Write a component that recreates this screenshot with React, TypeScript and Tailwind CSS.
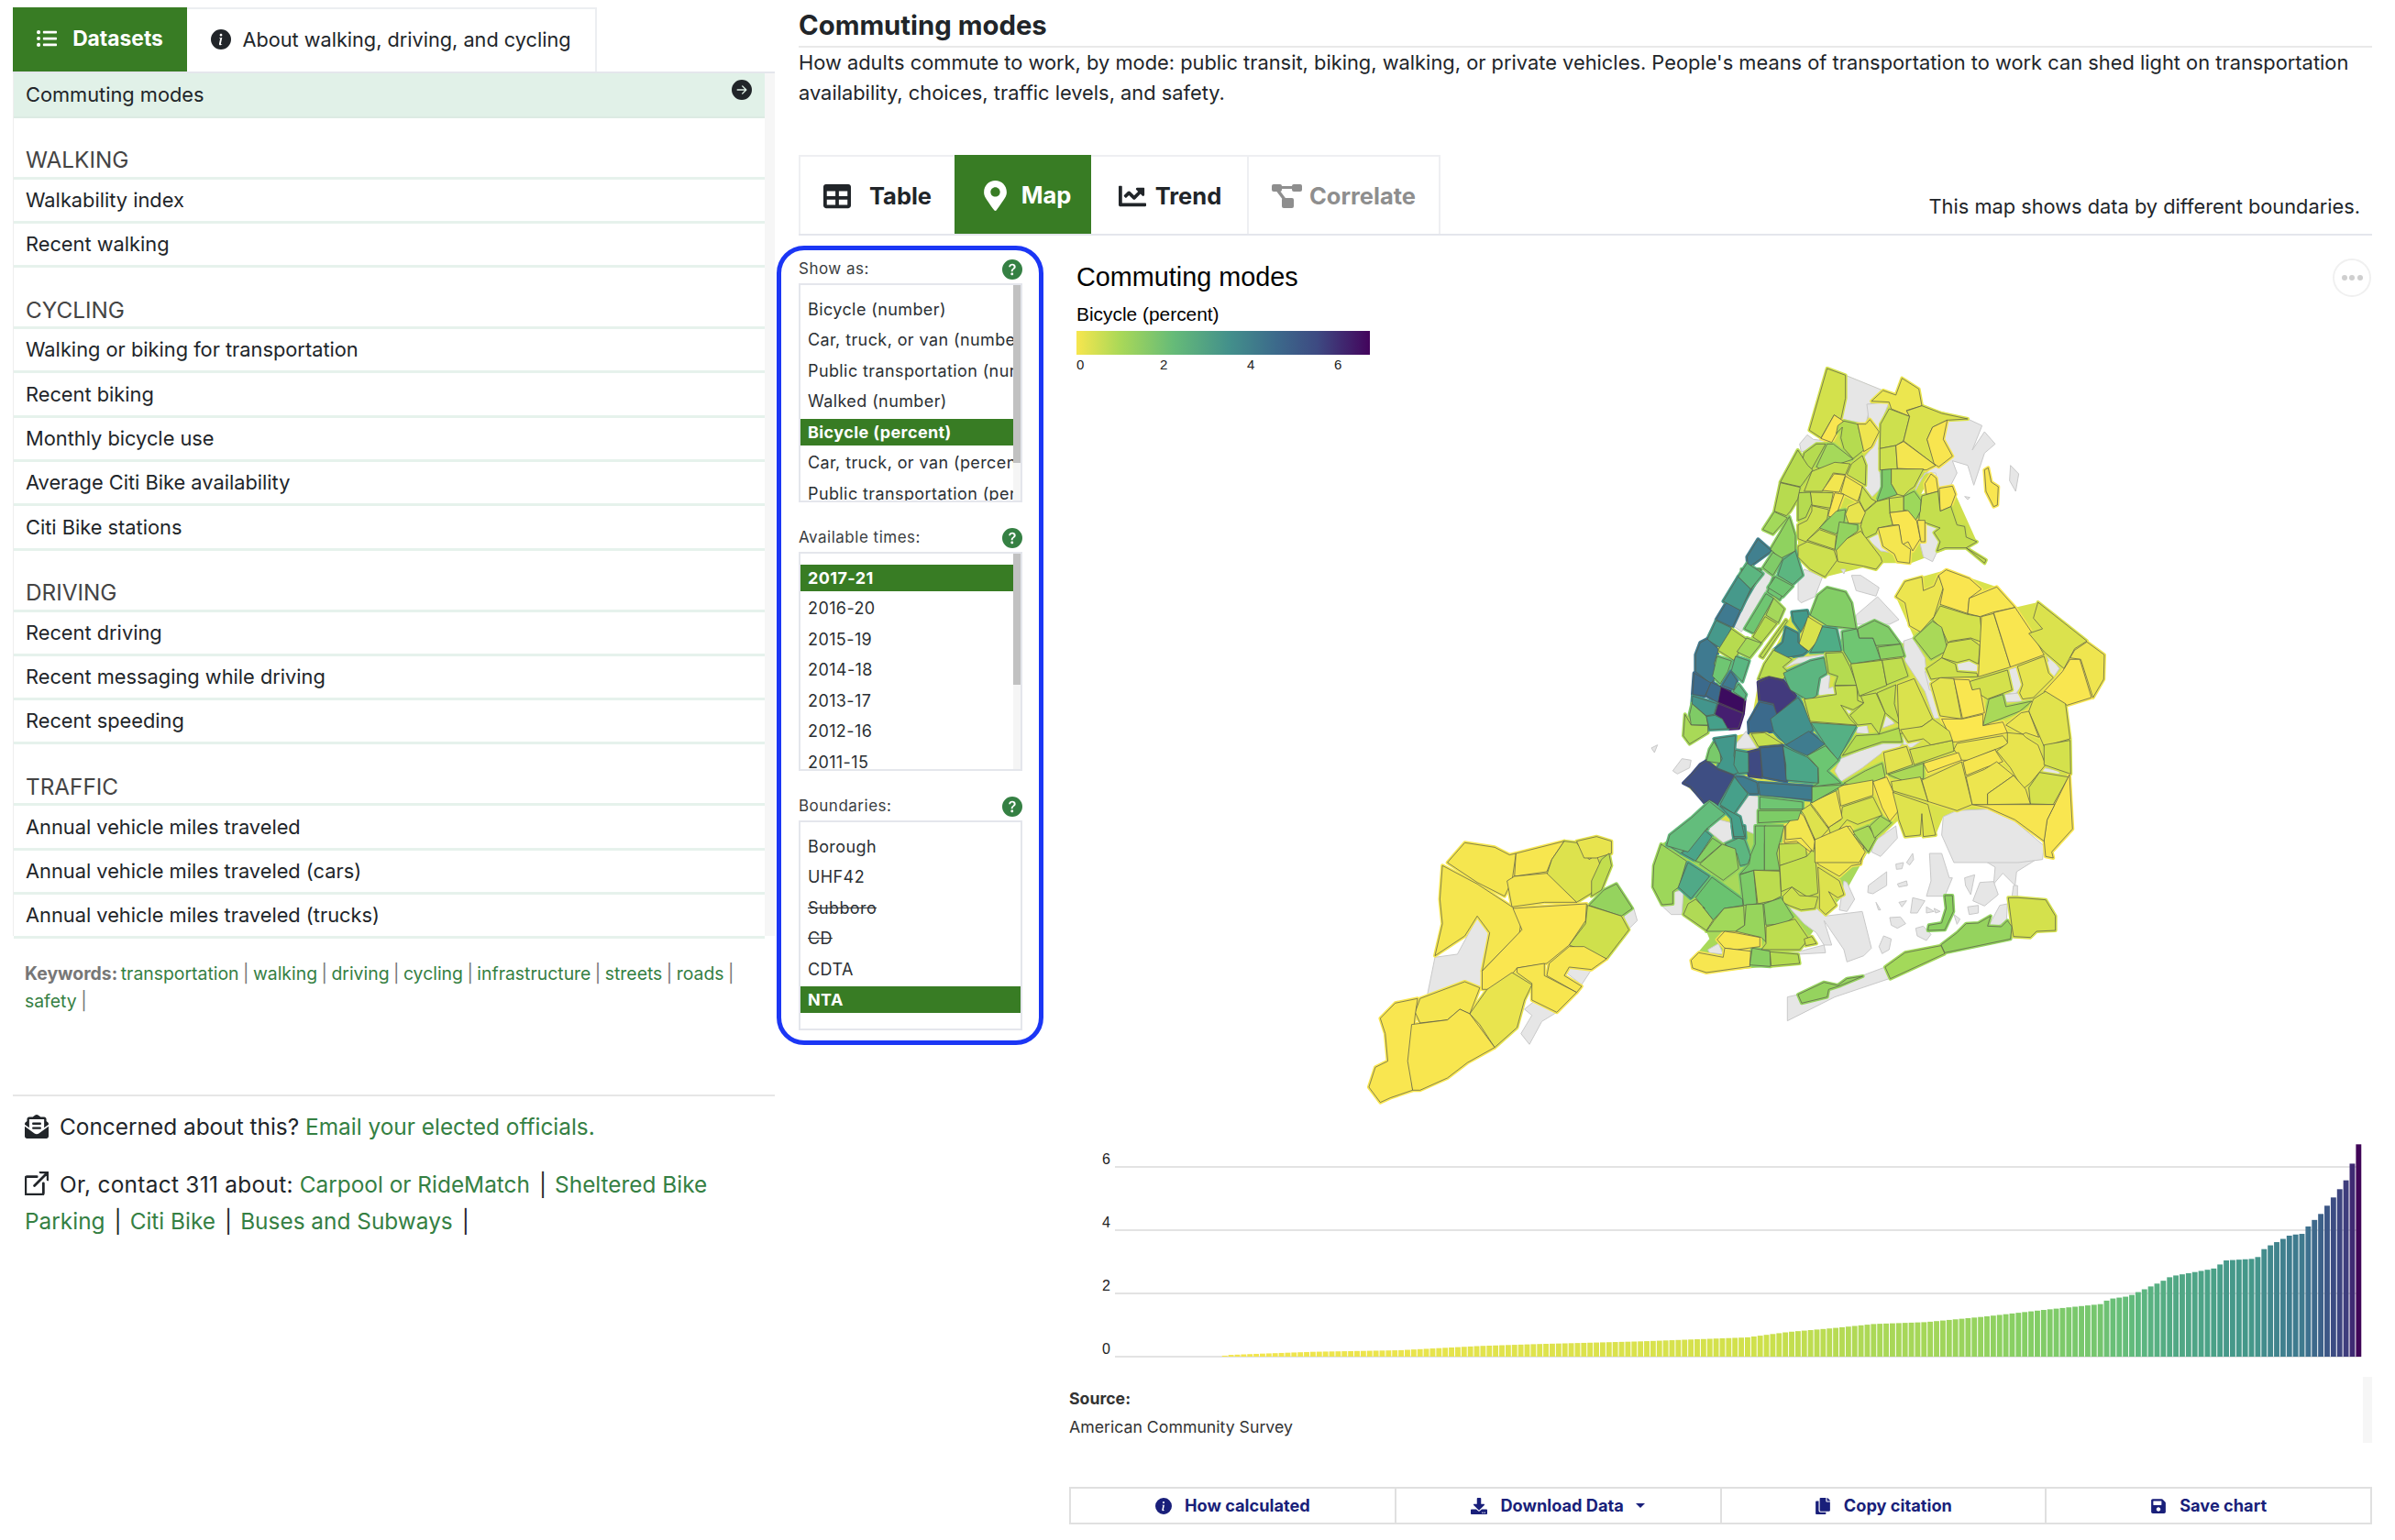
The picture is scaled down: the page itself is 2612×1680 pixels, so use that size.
import type { ReactNode } from 'react';
import { BsArrowRightCircleFill, BsBoxArrowUpRight, BsInfoCircleFill, BsQuestionCircleFill } from 'react-icons/bs';
import { FaChartLine, FaCopy, FaDownload, FaEnvelopeOpenText, FaListUl, FaMapMarkerAlt, FaSave, FaTable } from 'react-icons/fa';

const SECTIONS = [
  { title: 'WALKING', rows: ['Walkability index', 'Recent walking'] },
  { title: 'CYCLING', rows: ['Walking or biking for transportation', 'Recent biking', 'Monthly bicycle use', 'Average Citi Bike availability', 'Citi Bike stations'] },
  { title: 'DRIVING', rows: ['Recent driving', 'Recent messaging while driving', 'Recent speeding'] },
  { title: 'TRAFFIC', rows: ['Annual vehicle miles traveled', 'Annual vehicle miles traveled (cars)', 'Annual vehicle miles traveled (trucks)'] },
];

const KEYWORDS = ['transportation', 'walking', 'driving', 'cycling', 'infrastructure', 'streets', 'roads', 'safety'];

type Poly = [string, string];

// traced from the map, one list per crop so the numbers stay readable
const BRONX_LAND = '95,33 155,55 278,105 320,120 340,65 405,155 555,198 500,320 450,350 400,450 515,445 585,600 500,620 370,670 270,670 90,715 0,650 0,440 40,300 75,262';

const BRONX_GRAY = [
  '155,55 278,105 240,140 222,215 140,198 155,130',
  '225,150 298,143 262,235 232,205',
  '268,235 265,360 275,420 240,455 210,420 210,330 250,285',
  '485,205 555,198 602,220 570,300 610,240 645,280 610,310 575,415 555,350 505,335 520,375 500,415 460,425 450,375 415,375 380,440 395,400 440,355 470,350 505,320 475,265',
  '695,350 722,378 712,435 692,400',
  '545,452 562,455 555,462',
  '415,535 465,555 450,570 470,600 440,665 410,650 400,610',
  '225,590 260,570 300,635 270,630',
  '5,280 30,250 50,265 90,270 40,300 10,305',
  '20,690 80,715 55,780 10,800 0,790 0,730',
  '175,710 205,710 265,750 255,778 190,760',
  '190,840 260,780 330,855 300,870 190,870',
  '140,690 155,690 150,705',
];

const BRONX: Poly[] = [
  ['#d3e14c', '95,33 155,55 155,130 140,200 118,185 75,260 37,235'],
  ['#f9e650', '118,185 148,205 110,275 75,262'],
  ['#b5db50', '150,205 195,215 215,300 180,328 150,295 140,260 145,225 125,245 130,220'],
  ['#efe54f', '195,215 222,215 235,200 265,240 240,290 215,305'],
  ['#ece64f', '240,140 278,105 320,120 340,65 395,100 405,155 355,170 365,190 305,165 298,143'],
  ['#cde04e', '298,165 365,190 345,270 320,285 268,295 270,215'],
  ['#dbe24d', '355,172 405,155 470,180 555,198 488,202 440,225 422,265 450,350 345,270 365,190'],
  ['#f8e54f', '488,202 475,265 505,320 460,355 445,345 422,265 440,225'],
  ['#cde04e', '268,295 320,285 325,362 268,365'],
  ['#f4e650', '320,285 345,272 450,350 420,365 325,360'],
  ['#7ccb68', '275,365 305,362 305,410 325,445 258,468 275,420'],
  ['#cde04e', '305,362 410,362 380,420 365,430 345,450 325,445 305,410'],
  ['#f9e650', '415,410 435,378 452,392 458,435 420,445'],
  ['#f9e650', '462,425 505,418 515,445 500,485 465,500'],
  ['#f9e650', '610,365 622,358 632,405 655,420 652,480 640,485 615,435'],
  ['#c4de4e', '405,450 458,435 465,500 500,485 520,545 545,550 550,585 585,600 550,620 615,660 610,670 550,620 480,620 455,630 465,600 445,570 465,555 395,530'],
  ['#9dd85b', '345,452 380,435 402,465 400,500 385,530 360,500 345,495'],
  ['#cde04e', '298,458 345,452 345,500 300,505'],
  ['#c6df4d', '258,468 298,458 300,505 310,545 262,555 255,572 218,590 205,550 215,505'],
  ['#f9e650', '300,505 360,498 388,532 400,590 375,630 360,600 340,610 330,545 310,545'],
  ['#f4e650', '262,555 330,545 340,605 368,625 365,670 325,665 315,640 278,615'],
  ['#f9e650', '390,530 415,530 415,600 402,600'],
  ['#b5db50', '20,310 60,280 90,280 40,370 15,330'],
  ['#a5d95a', '95,280 115,280 180,330 135,345 70,360 60,355'],
  ['#c6df4e', '70,360 120,340 170,345 155,380 115,375 80,435 20,435 45,370'],
  ['#c6df4e', '175,345 210,318 222,350 220,415 160,380'],
  ['#f2e64f', '118,378 155,382 135,438 80,432'],
  ['#f2e64f', '155,385 212,420 195,468 140,440'],
  ['#cde04e', '40,438 115,440 105,490 45,480'],
  ['#f9e650', '120,440 150,445 120,525 98,515'],
  ['#cde04e', '210,420 240,460 255,468 218,500 200,465'],
  ['#e8e44e', '165,485 200,470 220,505 205,540 165,540 155,510'],
  ['#b5db50', '0,440 40,438 45,475 25,520 0,530'],
  ['#cde04e', '45,482 100,495 95,525 70,555 25,600 0,590 0,545 30,530 45,500'],
  ['#92d35f', '125,500 155,495 150,535 125,575 70,555 95,530'],
  ['#92d35f', '135,535 195,545 195,565 160,590 130,635 120,625'],
  ['#cde04e', '70,560 125,580 120,625 30,595'],
  ['#cde04e', '30,600 118,628 128,660 88,715 40,690 0,650 0,615'],
  ['#d5e14d', '205,565 270,650 275,665 255,690 215,680 130,665 125,628 160,590'],
];

const UPPER_WEST: Poly[] = [
  ['#b7db4f', '885,330 905,380 915,395 895,440 890,450 850,435'],
  ['#b7db4f', '850,437 890,452 885,490 870,530 862,545 838,530'],
  ['#a3d95a', '838,532 864,552 835,605 815,590'],
  ['#8fd25f', '868,548 880,610 880,660 850,685 830,655 850,600'],
  ['#41808f', '805,622 832,660 785,715 783,680'],
  ['#80cb68', '835,665 855,685 835,740 815,715'],
  ['#5cb680', '880,660 895,740 875,770 845,740 855,690'],
  ['#5cb680', '783,700 815,735 790,785 765,745'],
  ['#46998b', '765,745 790,785 770,855 735,825'],
  ['#6fc672', '840,745 875,775 855,810 825,780'],
];

const CENTRAL_LAND = '520,150 575,60 635,75 670,195 730,168 815,245 860,225 800,90 830,40 965,2 1130,58 1190,125 1265,108 1482,280 1480,360 1445,420 1355,445 1370,555 1378,850 1310,925 1285,885 1190,820 1000,790 955,810 930,870 810,820 700,925 680,960 440,885 350,830 270,880 180,850 240,800 175,765 105,700 180,628 205,555 275,545 320,535 350,370 385,355 430,365 400,265 440,190 460,140';

const CENTRAL_GRAY = [
  '365,5 400,25 295,205 268,185',
  '270,580 310,530 345,585 270,588',
  '430,325 480,290 575,278 540,298 470,310',
  '550,345 585,340 580,390 610,380 600,410 555,418 540,400',
  '825,235 855,225 895,290 900,340 945,485 925,490 895,400 830,300',
  '895,335 925,345 945,370 930,400 910,395',
  '620,445 640,445 670,490 670,510 640,490',
  '672,510 705,510 712,540 672,535',
  '740,480 775,468 795,505 750,522',
  '608,195 640,195 630,235 610,225',
  '995,310 1035,295 1075,315 1065,335 1000,335',
  '1235,215 1275,195 1295,270 1335,325 1315,355 1260,340 1300,300 1280,250',
  '1165,330 1198,320 1215,378 1190,410 1160,405 1180,395',
  '1155,410 1205,405 1240,430 1160,435',
  '1275,648 1335,660 1335,675 1280,665',
  '955,810 1000,790 1100,785 1190,825 1285,905 1280,950 1200,960 990,960 950,870',
  '600,660 620,620 680,595 760,570 820,570 800,600 755,600 690,650 620,695',
  '815,545 885,530 885,560 850,585 820,570',
  '320,740 352,745 345,870 310,855 280,795',
  '205,815 262,830 268,880 235,895 180,850',
  '700,360 735,335 755,400 735,415',
  '70,660 100,620 130,625 125,650 85,670',
  '0,585 20,575 10,600',
];

const CENTRAL: Poly[] = [
  ['#6cc072', '295,0 360,0 330,45 300,25'],
  ['#46998b', '300,20 340,45 290,130 245,105'],
  ['#3f7a90', '245,110 292,132 265,190 212,165'],
  ['#46998b', '212,168 262,192 232,262 183,230'],
  ['#3f7a90', '183,228 220,262 205,310 222,335 195,375 145,335 145,280 160,240'],
  ['#3b6a8c', '140,340 195,372 175,415 135,410'],
  ['#3b6a8c', '195,370 228,385 220,438 178,412'],
  ['#3c0b5f', '228,385 305,425 300,470 218,435'],
  ['#451f70', '218,440 300,472 285,520 250,522 232,490 208,475'],
  ['#43958c', '135,415 215,440 205,475 180,480 133,440'],
  ['#7fcb66', '125,475 133,440 180,482 185,510 130,510'],
  ['#a9d957', '110,475 130,510 185,512 185,535 125,572 105,545'],
  ['#45a08a', '180,482 208,478 232,490 250,522 190,525'],
  ['#6fc672', '400,25 445,55 420,100 380,75'],
  ['#6fc672', '375,80 400,95 335,210 305,195'],
  ['#a5d85a', '400,95 435,130 415,175 375,150'],
  ['#b7db4f', '372,155 410,178 360,240 332,222'],
  ['#b7db4f', '262,195 312,230 270,298 218,265'],
  ['#a3d95a', '312,225 360,242 322,290 280,270'],
  ['#6fc672', '215,285 262,300 250,335 225,375 200,350'],
  ['#5ab782', '275,285 320,300 298,368 262,332'],
  ['#3f7a90', '260,335 280,365 270,395 232,380'],
  ['#5ab782', '285,375 310,410 305,425 268,400'],
  ['#bddd4f', '440,165 445,170 365,290 355,285'],
  ['#83ce66', '575,60 635,75 655,110 670,195 625,190 575,185 520,150 545,85'],
  ['#429a8b', '460,140 510,135 515,155 490,205 465,170'],
  ['#d9e24c', '512,155 560,185 540,240 515,268 483,245'],
  ['#41908c', '440,190 480,210 480,240 510,268 495,280 435,290 400,265 430,240'],
  ['#4fad86', '560,188 605,195 622,268 520,272 540,235'],
  ['#6fc672', '625,205 672,195 680,225 725,225 750,295 655,310 630,270'],
  ['#80cc68', '675,195 730,168 775,190 815,245 735,250 725,225 680,225'],
  ['#8cd160', '740,255 815,245 828,285 750,295'],
  ['#bbdc4f', '400,265 460,295 430,320 450,340 430,360 385,350 350,360 370,310'],
  ['#5cb680', '432,340 520,300 565,290 575,340 550,355 540,415 515,430 455,395 445,375'],
  ['#423a7d', '350,370 385,355 430,365 475,420 410,475 400,440 355,430'],
  ['#3b6a8c', '355,435 400,445 410,475 405,530 320,535 318,500'],
  ['#42918c', '390,490 480,420 500,450 515,490 530,525 510,540 440,575 400,530'],
  ['#3f7c8f', '440,575 515,530 568,572 510,610 465,590'],
  ['#55b084', '522,502 672,512 610,625 570,575'],
  ['#c5df4e', '327,538 370,535 430,572 350,580'],
  ['#b5db50', '570,275 625,272 650,320 672,380 600,380 610,350 580,340'],
  ['#c5df4e', '600,382 672,380 675,430 695,438 660,460 620,445 650,490 670,510 520,498 500,425 540,420 605,410'],
  ['#bddd4e', '652,310 755,298 770,380 680,415'],
  ['#c0de4e', '755,298 820,290 840,350 770,378'],
  ['#c5df4e', '685,415 735,405 765,470 745,540 720,505 675,510 650,478 695,438'],
  ['#c6df4d', '738,405 800,378 795,440 815,510 765,470'],
  ['#dae24d', '805,378 860,358 920,490 885,515 810,540'],
  ['#ece54f', '830,40 885,25 890,70 925,55 940,20 955,60 925,155 880,205 845,185 830,110 800,90'],
  ['#f9e550', '965,2 1040,30 1080,65 1040,95 1035,145 990,130 945,115 955,65 940,20'],
  ['#f8e64f', '1040,95 1130,58 1190,125 1120,140 1075,155 1035,145'],
  ['#d3e14c', '945,120 1035,148 1075,155 1085,240 1045,225 980,235 970,240 950,195 920,165'],
  ['#a9d958', '860,225 920,170 950,190 970,265 915,295'],
  ['#d0e04c', '970,240 1045,228 1075,250 1070,310 1040,295 1000,305 950,290'],
  ['#cfe04c', '900,325 950,290 995,310 1000,335 1065,340 1068,352 950,355 915,360'],
  ['#f0e64f', '1080,155 1120,145 1175,320 1070,352'],
  ['#f9e650', '1120,142 1190,125 1240,200 1285,280 1175,320'],
  ['#dbe24d', '1250,160 1265,108 1425,235 1385,260 1350,325 1285,270 1235,210 1280,195'],
  ['#efe54f', '1385,265 1425,238 1482,280 1480,360 1445,420 1405,295 1370,290'],
  ['#f9e650', '1370,295 1402,295 1440,420 1360,445 1285,400 1345,335'],
  ['#d4e14c', '1040,368 1165,330 1180,395 1100,425 1050,395'],
  ['#e6e44e', '1198,318 1285,285 1300,340 1315,355 1250,420 1215,425 1205,405 1215,378'],
  ['#a9d958', '1105,425 1150,410 1160,450 1245,432 1205,465 1085,512 1095,470'],
  ['#e5e44e', '915,375 945,355 990,358 1015,490 945,480'],
  ['#f9e650', '990,360 1040,362 1050,395 1075,390 1090,470 1018,488'],
  ['#e1e34d', '1250,425 1290,400 1355,440 1370,555 1285,580 1235,465'],
  ['#ece54f', '1210,470 1235,465 1268,550 1225,535 1215,540 1160,510'],
  ['#fbe74f', '950,490 1018,490 1085,475 1085,512 1150,500 1165,535 1000,565 985,565'],
  ['#ede54f', '1000,570 1150,545 1170,572 1125,590 1040,625 1015,625 990,590'],
  ['#f6e64f', '1020,630 1125,590 1130,600 1150,630 1090,650 1030,675'],
  ['#e8e44e', '1130,595 1165,570 1165,535 1215,540 1225,550 1265,575 1290,640 1240,700 1215,720 1175,650'],
  ['#d4e14c', '1285,575 1370,560 1372,670 1285,640'],
  ['#d5e14c', '1270,665 1365,680 1315,770 1240,768 1235,715'],
  ['#f9e650', '1368,672 1378,850 1310,925 1315,945 1290,940 1285,885 1295,820 1320,770'],
  ['#f7e550', '1050,770 1320,770 1295,820 1285,890 1190,820 1100,780'],
  ['#e8e34e', '885,690 1015,630 1050,770 1000,790 905,760'],
  ['#ede54f', '1030,680 1090,655 1130,630 1185,675 1100,735 1100,770 1050,770'],
  ['#ede54f', '1100,735 1185,675 1225,720 1240,768 1100,770'],
  ['#f9e650', '890,635 1005,600 1015,625 905,665'],
  ['#d3e14c', '845,590 985,560 990,595 860,640'],
  ['#d9e24c', '815,525 885,515 920,490 975,530 985,560 915,575 890,555 840,565'],
  ['#b3db50', '625,610 670,545 745,540 810,520 820,565 755,565 680,590'],
  ['#e3e34e', '760,600 835,580 855,640 770,670'],
  ['#abd957', '775,672 890,635 890,685 830,695'],
  ['#a9d958', '630,700 700,660 755,635 765,680 700,710 670,715'],
  ['#efe54f', '610,710 725,690 725,740 620,775'],
  ['#f8e64f', '725,695 770,680 808,765 805,795 780,825 755,780'],
  ['#dfe34d', '785,695 880,680 905,760 790,725'],
  ['#dfe34d', '790,730 905,770 930,870 890,875 885,800 880,870 830,875 810,820 805,790'],
  ['#d7e24c', '625,778 725,745 755,805 675,835 640,820 590,880 580,845 620,820'],
  ['#eee54f', '520,765 605,725 625,815 580,845 540,790'],
  ['#dee24d', '490,790 520,770 580,850 540,895 500,805'],
  ['#f2e64f', '440,840 480,790 500,810 535,890 530,925 490,880 440,885'],
  ['#efe54f', '535,885 640,840 700,925 680,960 535,960'],
  ['#a9d958', '660,860 710,840 735,880 710,925'],
  ['#a7d858', '715,840 750,808 785,830 730,880'],
  ['#4ba688', '430,578 465,595 510,615 545,650 545,700 440,690 440,640'],
  ['#6cc672', '510,610 570,578 612,625 575,660 620,700 525,712 548,700 546,650'],
  ['#7dcb67', '525,712 630,705 525,765'],
  ['#79ca6a', '205,565 225,600 228,635 180,628 190,590'],
  ['#42988b', '205,555 275,545 270,610 285,665 270,672 215,650 232,620'],
  ['#47a08a', '275,592 318,600 318,665 285,668 270,640'],
  ['#3f4a82', '318,600 356,590 362,680 320,675'],
  ['#3c668a', '356,585 430,578 442,695 365,680'],
  ['#3e4e83', '180,628 215,655 272,675 218,770 190,755 175,765 130,712 105,700 130,675 160,640'],
  ['#3f7c8f', '272,678 300,680 345,698 350,735 320,735 290,705'],
  ['#3f7c8f', '350,698 525,710 525,755 355,740'],
  ['#46a08a', '272,680 315,735 270,800 225,770'],
  ['#6fc672', '355,745 495,762 495,785 355,785'],
  ['#7dcc66', '350,790 490,790 480,820 440,825 350,830'],
  ['#63bd7c', '190,760 240,800 180,850 120,925 50,905 60,870 130,815'],
  ['#46a08a', '225,775 290,810 305,875 270,875 262,815'],
];

const SOUTH_LAND = '65,200 92,60 125,40 200,0 750,0 790,45 690,225 630,290 545,405 545,450 240,480 190,440 250,370 240,345 165,290 95,258';

const SOUTH_GRAY = [
  '1020,0 1270,0 1340,65 1335,100 1255,150 1250,195 1210,155 1180,190 1185,135 1110,90',
  '510,265 550,278 600,270 630,295 750,280 780,400 755,425 700,445 690,405 625,310 650,390 625,390 600,350 560,320',
  '450,410 555,408 625,390 630,415 540,420',
  '245,405 280,385 295,420 250,415',
  '770,195 830,150 830,195 785,222 768,218',
  '860,125 885,120 880,140 862,142',
  '895,120 915,90 918,110 905,128',
  '865,190 895,180 898,195 870,200',
  '970,90 1010,90 1035,170 1045,170 1020,230 960,230 975,180',
  '1085,170 1118,160 1105,225 1088,195',
  '1135,185 1180,182 1195,225 1150,262 1112,245',
  '915,235 955,245 930,285 908,285',
  '960,265 985,280 960,285',
  '985,270 1005,280 990,285',
  '840,300 875,298 892,320 865,335 845,325',
  '925,335 950,328 975,355 960,375 930,360',
  '820,360 845,370 838,405 815,418 805,395',
  '1050,290 1070,305 1060,322',
  '870,250 895,245 880,265',
  '795,250 810,275 803,275',
  '1095,265 1130,260 1130,285 1100,290',
  '1165,325 1200,260 1225,255 1222,310 1190,330',
  '1245,195 1258,195 1258,230 1240,230',
  '505,560 540,552 550,580 635,540 670,525 750,490 825,462 838,500 660,560 505,638',
  '135,215 165,210 160,290 125,290 95,262 130,255',
  '690,180 700,185 725,240 700,280 675,275',
  '495,30 535,30 535,52 495,52',
  '790,50 860,0 865,40 810,100 780,85',
];

const SOUTH: Poly[] = [
  ['#5cb680', '300,60 345,40 365,45 385,100 375,125 350,130 340,90'],
  ['#47a08a', '325,0 365,0 368,40 330,40'],
  ['#63bd7c', '125,40 200,0 245,10 155,90 110,60'],
  ['#4aa489', '160,90 235,15 258,35 205,115'],
  ['#85cf62', '205,115 260,40 290,60 220,120'],
  ['#95d35e', '218,125 292,60 335,75 345,140 295,178'],
  ['#9dd75a', '92,60 175,115 150,200 130,215 130,255 95,258 65,200 68,130'],
  ['#50a987', '180,120 250,165 190,238 148,200'],
  ['#6ac370', '258,168 358,240 360,260 298,270 262,308 228,265 205,235'],
  ['#7ccb68', '350,160 395,145 405,255 362,260'],
  ['#78ca6a', '380,125 385,95 400,60 400,0 435,0 430,60 430,145 395,145 350,158'],
  ['#82cd65', '430,0 495,0 470,90 480,145 430,145'],
  ['#bcdc4f', '395,145 480,148 485,230 455,245 408,255'],
  ['#c2de4e', '478,60 565,55 568,100 530,115 480,130'],
  ['#c4df4d', '480,130 568,100 595,70 605,220 570,232 520,200 485,215'],
  ['#f5e64f', '497,0 590,0 593,60 580,85 535,50 495,55'],
  ['#f0e64f', '600,70 660,15 710,0 755,70 745,125 715,130 675,165 605,125'],
  ['#f2e64f', '590,0 640,0 630,15 595,50'],
  ['#a9d958', '720,30 770,0 790,45 770,85'],
  ['#dde24d', '605,135 675,180 690,225 670,235 640,215 665,260 630,290 610,270 610,220'],
  ['#cde04d', '490,230 520,200 545,228 605,232 595,270 550,275 510,260 490,250'],
  ['#8dd160', '428,255 485,235 525,300 495,320 435,325'],
  ['#97d55c', '370,258 425,255 435,380 420,365 335,345 365,325'],
  ['#a2d95a', '298,270 362,262 365,325 335,345 300,345 240,345 265,310'],
  ['#b0da55', '205,240 235,270 228,265 262,308 240,342 165,290 180,255'],
  ['#bddd4f', '435,330 530,305 575,370 545,405 420,405 435,385'],
  ['#f7e64f', '300,345 335,350 415,365 415,395 340,405 300,400 275,372'],
  ['#f7e650', '190,440 215,415 295,430 300,400 385,410 382,460 240,480 195,465'],
  ['#89cf62', '390,400 448,410 450,460 382,455'],
  ['#b3db50', '448,412 540,420 545,450 452,458'],
  ['#cde04d', '560,370 585,362 600,385 565,392'],
  ['#8bd160', '1020,228 1045,228 1048,280 1020,340 965,342 968,325 1010,318 1025,270'],
  ['#95d35e', '1008,390 1020,415 1235,370 1240,330 1225,310 1205,330 1160,328 1170,295 1130,318 1090,320 1060,350 1010,388'],
  ['#a3d95a', '825,462 890,415 1008,392 1020,418 842,500'],
  ['#d4e14c', '1228,235 1260,235 1350,242 1382,295 1382,342 1320,345 1300,365 1245,362 1240,330'],
  ['#95d35e', '540,552 625,512 670,522 700,500 752,492 680,522 640,535 635,560 552,580'],
];

const STATEN_GRAY = [
  '155,790 200,780 240,660 270,710 250,830 250,890 175,920 140,910',
  '415,835 430,820 470,830 450,880',
  '365,920 400,970 370,1000 345,1075 328,1040 350,980 335,960',
  '535,645 555,630 562,670 540,705',
];

const STATEN: Poly[] = [
  ['#f5e64f', '180,480 215,415 275,430 305,455 318,450 310,540 295,590 240,545'],
  ['#f7e64f', '318,450 415,410 390,470 380,510 315,525'],
  ['#dde24d', '390,470 415,410 440,415 465,470 480,455 490,500 470,580 440,610 380,520'],
  ['#e8e44e', '440,410 480,395 510,410 510,450 480,465 455,465'],
  ['#c2de4e', '490,470 505,450 510,490 490,570 470,590 470,540'],
  ['#95d35e', '495,570 520,550 552,630 530,655 465,620'],
  ['#f5e64f', '300,540 315,525 380,515 440,610 375,610 310,625'],
  ['#f5e64f', '170,490 240,550 310,625 330,655 325,710 250,835 265,710 240,655 215,720 155,785 170,680 165,600'],
  ['#fae650', '312,630 460,615 458,670 425,750 380,810 320,825 285,895 250,895 250,835 330,700'],
  ['#cfe04c', '462,620 530,655 545,700 500,795 425,750 458,680'],
  ['#f7e64f', '425,755 455,755 500,795 470,830 425,822 415,850 450,885 440,905 380,850 385,810'],
  ['#f7e64f', '320,825 375,810 375,850 440,905 400,970 350,930 350,875 320,840'],
  ['#e9e44e', '260,895 310,840 350,880 335,930 320,1020 275,1085 245,1010 225,975'],
  ['#f5e64f', '125,925 215,870 245,890 225,975 205,960 180,995 125,1005 115,970'],
  ['#f9e650', '45,990 75,940 120,925 115,980 105,1130 110,1225 65,1250 45,1265 22,1215 35,1150 60,1130 55,1040'],
  ['#f8e64f', '108,1010 180,995 205,960 225,975 275,1085 220,1135 180,1185 125,1225 110,1225 100,1130'],
];

const MAP_GROUPS: { transform: string; land?: [string, string]; gray: string[]; fill: Poly[] }[] = [
  { transform: 'translate(1480 780) scale(0.542 0.3333)', gray: STATEN_GRAY, fill: STATEN },
  { transform: 'translate(1780 900) scale(0.3333)', land: ['#a8d95a', SOUTH_LAND], gray: SOUTH_GRAY, fill: SOUTH },
  { transform: 'translate(1800 620) scale(0.3333)', land: ['#d9e24c', CENTRAL_LAND], gray: CENTRAL_GRAY, fill: CENTRAL },
  { transform: 'translate(1960 390) scale(0.3333)', land: ['#cfe04c', BRONX_LAND], gray: BRONX_GRAY, fill: BRONX },
  { transform: 'translate(1480 380) scale(0.542 0.3333)', gray: [], fill: UPPER_WEST },
];

function NycMap() {
  return (
    <svg viewBox="1480 390 840 830" width={840} height={830} className="block">
      {MAP_GROUPS.map((g) => g.land && <polygon key={g.transform} transform={g.transform} points={g.land[1]} fill={g.land[0]} />)}
      {MAP_GROUPS.map((g) => (
        <g key={g.transform} transform={g.transform}>
          {g.gray.map((pts) => (
            <polygon key={pts} points={pts} fill="#e6e6e6" stroke="#c9c9c9" strokeWidth={1} vectorEffect="non-scaling-stroke" />
          ))}
        </g>
      ))}
      {/* same colour fat stroke first, it closes the small gaps the tracing leaves */}
      {MAP_GROUPS.map((g) => (
        <g key={g.transform} transform={g.transform}>
          {g.fill.map(([color, pts]) => (
            <polygon key={pts} points={pts} fill={color} stroke={color} strokeWidth={4} strokeLinejoin="round" vectorEffect="non-scaling-stroke" />
          ))}
        </g>
      ))}
      {MAP_GROUPS.map((g) => (
        <g key={g.transform} transform={g.transform}>
          {g.fill.map(([color, pts]) => (
            <polygon key={pts} points={pts} fill={color} stroke="#55584a" strokeWidth={1} strokeOpacity={0.7} strokeLinejoin="round" vectorEffect="non-scaling-stroke" />
          ))}
        </g>
      ))}
    </svg>
  );
}

// px from chart left -> bar height in zoomed px (3x vertically), read off the chart
const CURVE: [number, number][] = [
  [115, 0], [116, 5], [157, 10], [213, 16], [306, 21], [394, 35], [454, 41], [569, 50], [685, 63], [731, 81], [778, 93], [824, 107], [880, 113], [944, 131], [1009, 153], [1074, 173], [1079, 188], [1102, 198], [1139, 248], [1148, 263], [1194, 288], [1208, 315], [1241, 321], [1250, 355], [1278, 398], [1294, 403], [1298, 431], [1310, 463], [1324, 518], [1338, 573], [1345, 628], [1352, 695],
];

const STOPS: [number, number[]][] = [
  [0, [247, 230, 78]],
  [0.7, [204, 224, 76]],
  [1.4, [134, 207, 100]],
  [2, [95, 185, 126]],
  [3, [70, 155, 138]],
  [4, [62, 118, 143]],
  [5, [61, 78, 131]],
  [6, [63, 48, 120]],
  [6.7, [64, 6, 88]],
];

function viridis(v: number) {
  for (let i = 1; i < STOPS.length; i++) {
    if (v <= STOPS[i][0]) {
      const [a, ca] = STOPS[i - 1];
      const [b, cb] = STOPS[i];
      const t = (v - a) / (b - a);
      return `rgb(${ca.map((c, j) => Math.round(c + (cb[j] - c) * t)).join(',')})`;
    }
  }
  return 'rgb(64,6,88)';
}

function curveAt(x: number) {
  for (let i = 1; i < CURVE.length; i++) {
    if (x <= CURVE[i][0]) {
      const [x0, y0] = CURVE[i - 1];
      const [x1, y1] = CURVE[i];
      return y0 + ((y1 - y0) * (x - x0)) / (x1 - x0);
    }
  }
  return CURVE[CURVE.length - 1][1];
}

const BAR_W = 6.87;
const BARS = Array.from({ length: 198 }, (_, i) => {
  const x = i * BAR_W;
  return { x, h: curveAt(x + BAR_W - 8) / 3 };
});

function BarChart() {
  const grid = [
    { label: '6', y: 41 },
    { label: '4', y: 110 },
    { label: '2', y: 179 },
    { label: '0', y: 248 },
  ];
  return (
    <svg width={1426} height={252} className="block">
      {grid.map((g) => (
        <g key={g.label}>
          <line x1={50} x2={1409} y1={g.y} y2={g.y} stroke="#e3e3e3" strokeWidth={2} />
          <text x={36} y={g.y - 3} fontSize={16} fontFamily="Liberation Sans, Arial, sans-serif" fill="#222">{g.label}</text>
        </g>
      ))}
      {BARS.map((b) => (
        <rect key={b.x} x={50 + b.x} y={248 - b.h} width={BAR_W - 1} height={b.h} fill={viridis(b.h / 34.5)} />
      ))}
    </svg>
  );
}

function CorrelateIcon() {
  return (
    <svg width={33} height={26} viewBox="0 0 33 26" className="mr-[8px]" fill="currentColor" stroke="currentColor">
      <rect x={0} y={0} width={11} height={8} rx={2} stroke="none" />
      <rect x={22} y={0} width={11} height={8} rx={2} stroke="none" />
      <rect x={11} y={15} width={13} height={11} rx={2} stroke="none" />
      <line x1={8} y1={3.5} x2={25} y2={3.5} strokeWidth={3} />
      <line x1={6} y1={6} x2={15} y2={18} strokeWidth={3.5} />
    </svg>
  );
}

function ListBox({ items, selected, struck = [], scroll, heightClass }: { items: string[]; selected: string; struck?: string[]; scroll?: string; heightClass: string }) {
  return (
    <div className={`relative mb-[27px] overflow-hidden border-2 border-[#e4e6ec] pt-[11.5px] ${heightClass}`}>
      {items.map((item) => (
        <div
          key={item}
          className={`mb-[4.6px] flex h-[29px] items-center whitespace-nowrap pl-[8px] text-[18px] tracking-[0.4px] ${
            item === selected ? 'bg-[#387c24] font-bold text-white' : 'text-[#2b2f33]'
          } ${struck.includes(item) ? 'line-through' : ''}`}
        >
          {item}
        </div>
      ))}
      {scroll && (
        <div className="absolute right-0 top-0 h-full w-[8px] bg-[#f5f5f5]">
          <div className={`w-full bg-[#c1c1c1] ${scroll}`} />
        </div>
      )}
    </div>
  );
}

function ControlLabel({ children }: { children: ReactNode }) {
  return (
    <div className="mb-[3px] flex h-[24px] items-center justify-between text-[17px] tracking-[0.5px] text-[#3a3d41]">
      <span>{children}</span>
      <BsQuestionCircleFill className="text-[22px] text-[#358043]" />
    </div>
  );
}

function ViewTab({ icon, label, active, disabled, className }: { icon: ReactNode; label: string; active?: boolean; disabled?: boolean; className: string }) {
  return (
    <div
      className={`flex h-[86px] items-center justify-center pt-[2px] text-[25.5px] font-bold ${className} ${
        active ? 'bg-[#387c24] text-white' : disabled ? 'border-r-2 border-t-2 border-[#eeeff2] text-[#8e8e8e]' : 'border-t-2 border-[#eeeff2] text-[#212529]'
      }`}
    >
      {icon}
      <span>{label}</span>
    </div>
  );
}

function ActionButton({ icon, children }: { icon: ReactNode; children: ReactNode }) {
  return (
    <div className="flex flex-1 items-center justify-center gap-[14px] border-r-2 border-[#e0e0e0] text-[18.2px] font-bold text-[#191f7a] last:border-r-0">
      {icon}
      <span className="flex items-center gap-[13px]">{children}</span>
    </div>
  );
}

function Sep() {
  return <span className="ml-[10px] mr-[9px]">|</span>;
}

export default function App() {
  return (
    <div className="flex h-[1680px] w-[2612px] overflow-hidden bg-white font-['Inter','Noto_Sans',sans-serif] text-[#212529]">
      {/* left column */}
      <div className="ml-[14px] w-[831px] shrink-0 pt-[8px]">
        <div className="flex h-[72px] border-b-2 border-[#e4e6ec]">
          <div className="flex w-[190px] items-center justify-center gap-[17px] bg-[#387c24] pb-[2px] text-[22.8px] font-bold text-white">
            <FaListUl className="text-[22px]" />
            Datasets
          </div>
          <div className="flex w-[447px] items-center justify-center gap-[12px] border-r-2 border-t-2 border-[#eceef1] pb-[2px] text-[21.7px]">
            <BsInfoCircleFill className="text-[22px]" />
            About walking, driving, and cycling
          </div>
        </div>

        <div className="h-[941px] border-l border-r-[11px] border-l-[#eeeeee] border-r-[#f6f6f6]">
          <div className="relative flex h-[48.5px] items-center border-b-2 border-[#dcebe3] bg-[#e1f1e8] pl-[13px] text-[21.8px]">
            Commuting modes
            <BsArrowRightCircleFill className="absolute right-[14px] top-[7px] text-[22px]" />
          </div>
          {SECTIONS.map((section) => (
            <div key={section.title}>
              <div className="flex h-[67px] items-end border-b-[3px] border-[#e6f2ec] pb-[6px] pl-[13px] text-[24.3px] leading-none text-[#444444]">
                {section.title}
              </div>
              {section.rows.map((row) => (
                <div key={row} className="flex h-[48.3px] items-center border-b-[3px] border-[#e6f2ec] pl-[13px] text-[21.8px]">
                  {row}
                </div>
              ))}
            </div>
          ))}
        </div>

        <div className="mt-[26px] w-[805px] pl-[13px] text-[19.4px] leading-[30px] text-[#777] [word-spacing:-1px]">
          <b>Keywords: </b>
          {KEYWORDS.map((k) => (
            <span key={k}>
              <span className="text-[#358043]">{k}</span> |{' '}
            </span>
          ))}
        </div>

        <div className="mt-[87px] border-t-2 border-[#e6e6e6] pl-[13px] pt-[13px] text-[24.4px] leading-[40px]">
          <div className="flex items-center gap-[12px]">
            <FaEnvelopeOpenText className="text-[26px]" />
            <span>
              Concerned about this? <span className="text-[#358043]">Email your elected officials.</span>
            </span>
          </div>
          <div className="mt-[23px] w-[800px]">
            <BsBoxArrowUpRight className="mr-[12px] inline-block align-[-3px] text-[26px] [stroke-width:0.7] [stroke:currentColor]" />
            <span className="tracking-[0.3px]">Or, contact 311 about:</span> <span className="text-[#358043]">Carpool or RideMatch</span>
            <Sep />
            <span className="text-[#358043]">Sheltered Bike Parking</span>
            <Sep />
            <span className="text-[#358043]">Citi Bike</span>
            <Sep />
            <span className="text-[#358043]">Buses and Subways</span>
            <Sep />
          </div>
        </div>
      </div>

      {/* main column */}
      <div className="ml-[26px] w-[1716px] shrink-0">
        <div className="mt-[10px] border-b-2 border-[#e9e9e9] pb-[4px] text-[29.3px] font-bold leading-[36px]">Commuting modes</div>
        <p className="h-[119px] text-[21.85px] leading-[33px]">
          How adults commute to work, by mode: public transit, biking, walking, or private vehicles. People's means of transportation to work can shed light on transportation availability, choices, traffic levels, and safety.
        </p>

        <div className="flex h-[86px] items-end border-b-2 border-[#e4e6ec]">
          <div className="flex border-l-2 border-[#eeeff2]">
            <ViewTab icon={<FaTable className="mr-[20px] text-[30px]" />} label="Table" className="w-[168px]" />
            <ViewTab icon={<FaMapMarkerAlt className="mr-[12px] text-[33px]" />} label="Map" active className="w-[149px] pl-[6px]" />
            <ViewTab icon={<FaChartLine className="mr-[10px] text-[30px]" />} label="Trend" className="w-[170px] pl-[2px]" />
            <ViewTab icon={<CorrelateIcon />} label="Correlate" disabled className="w-[211px] border-l-2" />
          </div>
          <div className="flex-1 pb-[13px] pr-[13px] text-right text-[21.8px]">This map shows data by different boundaries.</div>
        </div>

        <div className="mt-[11px] flex">
          {/* controls */}
          <div className="-ml-[24px] h-[872px] w-[291px] shrink-0 rounded-[30px] border-[5px] border-[#1b36f5] pl-[19px] pr-[18px] pt-[9px]">
            <ControlLabel>Show as:</ControlLabel>
            <ListBox
              heightClass="h-[239px]"
              items={['Bicycle (number)', 'Car, truck, or van (number)', 'Public transportation (number)', 'Walked (number)', 'Bicycle (percent)', 'Car, truck, or van (percent)', 'Public transportation (percent)']}
              selected="Bicycle (percent)"
              scroll="h-[194px]"
            />
            <ControlLabel>Available times:</ControlLabel>
            <ListBox
              heightClass="h-[239px]"
              items={['2017-21', '2016-20', '2015-19', '2014-18', '2013-17', '2012-16', '2011-15']}
              selected="2017-21"
              scroll="h-[143px]"
            />
            <ControlLabel>Boundaries:</ControlLabel>
            <ListBox
              heightClass="h-[229px]"
              items={['Borough', 'UHF42', 'Subboro', 'CD', 'CDTA', 'NTA']}
              selected="NTA"
              struck={['Subboro', 'CD']}
            />
          </div>

          {/* map and chart */}
          <div className="ml-[28px] w-[1421px] shrink-0">
            <div className="relative h-[123px] pl-[8px] pt-[16px]">
              <div className="font-['Liberation_Sans',Arial,sans-serif] text-[28.8px] leading-[36px] text-black">Commuting modes</div>
              <div className="mt-[10px] font-['Liberation_Sans',Arial,sans-serif] text-[20.9px] leading-[26px] text-black">Bicycle (percent)</div>
              <div className="mt-[5px] h-[26px] w-[320px] bg-[linear-gradient(90deg,#f7e64e_0%,#a9d858_15%,#66bb78_33%,#43908b_52%,#3c6a8b_68%,#3d4a82_82%,#43045c_100%)]" />
              <div className="relative mt-[2px] h-[18px] w-[320px] font-['Liberation_Sans',Arial,sans-serif] text-[15px] leading-[18px] text-[#222]">
                <span className="absolute left-0">0</span>
                <span className="absolute left-[91px]">2</span>
                <span className="absolute left-[186px]">4</span>
                <span className="absolute left-[281px]">6</span>
              </div>
              <div className="absolute right-[1px] top-[14px] flex h-[42px] w-[42px] items-center justify-center gap-[2.5px] rounded-full border-2 border-[#f0f0f0]">
                <span className="h-[6px] w-[6px] rounded-full bg-[#cfcfcf]" />
                <span className="h-[6px] w-[6px] rounded-full bg-[#cfcfcf]" />
                <span className="h-[6px] w-[6px] rounded-full bg-[#cfcfcf]" />
              </div>
            </div>
            <div className="ml-[315px] h-[830px]">
              <NycMap />
            </div>
            <div className="mt-[11px]">
              <BarChart />
            </div>
            <div className="relative mt-[14px] h-[97px] text-[17.7px] leading-[31px] text-[#333]">
              <div className="absolute right-0 top-[4px] h-[72px] w-[10px] bg-[#f6f6f6]" />
              <div className="pt-[12px] font-bold">Source:</div>
              <div>American Community Survey</div>
            </div>
            <div className="mt-[27px] flex h-[41px] border-2 border-[#e0e0e0]">
              <ActionButton icon={<BsInfoCircleFill className="text-[18px]" />}>How calculated</ActionButton>
              <ActionButton icon={<FaDownload className="text-[18px]" />}>
                Download Data
                <span className="h-0 w-0 border-x-[5px] border-t-[5px] border-x-transparent border-t-[#191f7a]" />
              </ActionButton>
              <ActionButton icon={<FaCopy className="text-[18px]" />}>Copy citation</ActionButton>
              <ActionButton icon={<FaSave className="text-[18px]" />}>Save chart</ActionButton>
            </div>
          </div>
        </div>
      </div>
    </div>
  );
}
